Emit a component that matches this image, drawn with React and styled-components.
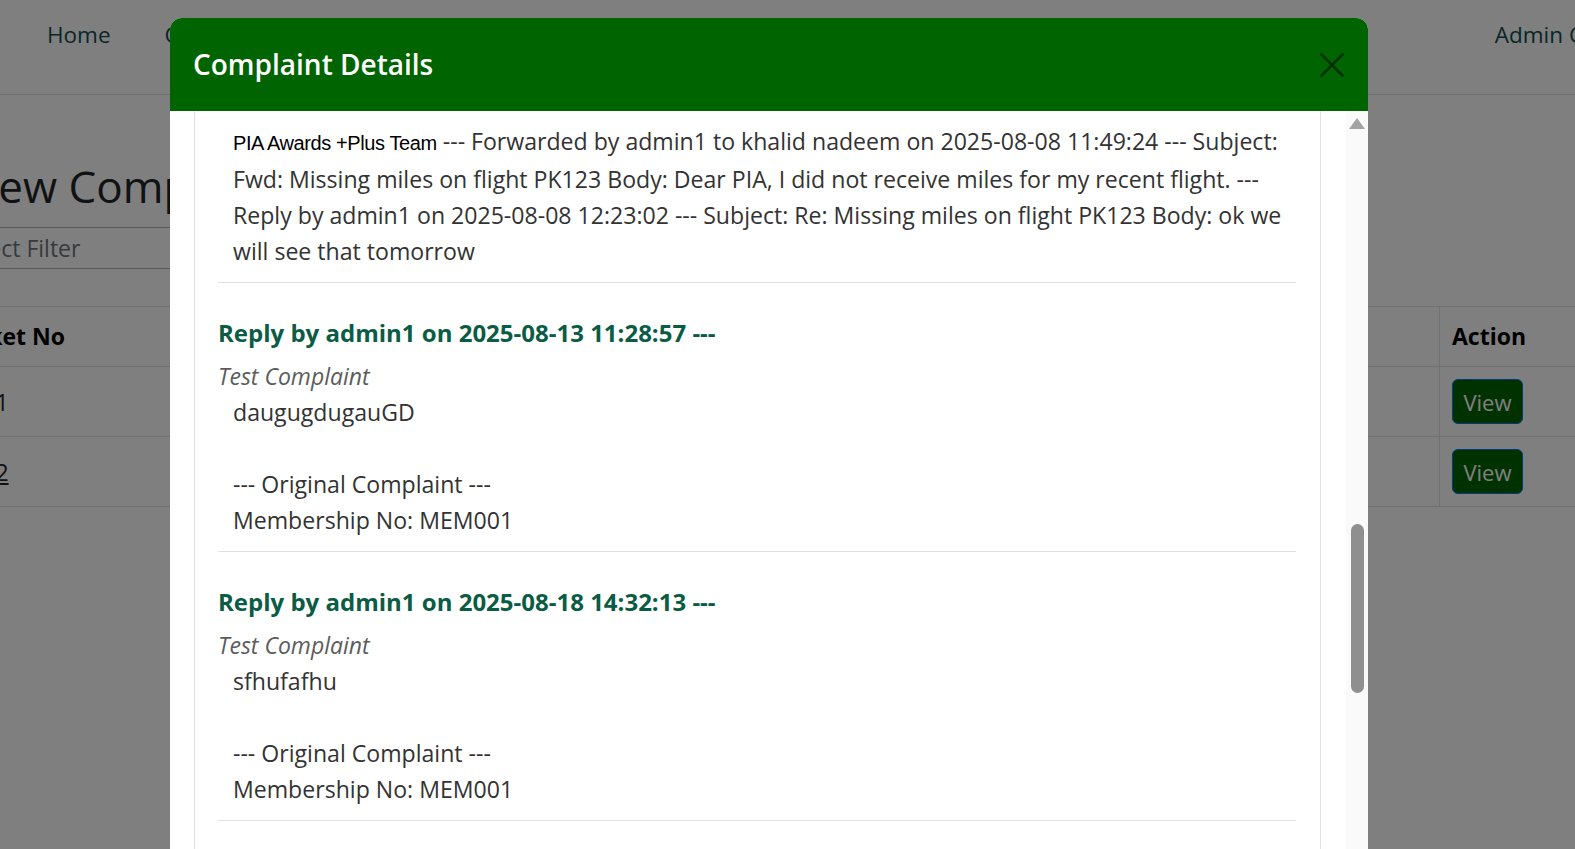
import { createGlobalStyle, styled } from "styled-components";

const GlobalStyle = createGlobalStyle`
  html, body {
    margin: 0;
    height: 100%;
    overflow: hidden;
  }
  body {
    font-family: "Open Sans", "Noto Sans", sans-serif;
    background: #fff;
    color: #212529;
  }
`;

const firstLines = [
  " --- Forwarded by admin1 to khalid nadeem on 2025-08-08 11:49:24 --- Subject:",
  "Fwd: Missing miles on flight PK123 Body: Dear PIA, I did not receive miles for my recent flight. ---",
  "Reply by admin1 on 2025-08-08 12:23:02 --- Subject: Re: Missing miles on flight PK123 Body: ok we",
  "will see that tomorrow",
];

const replies = [
  {
    by: "Reply by admin1 on 2025-08-13 11:28:57 ---",
    subject: "Test Complaint",
    body: "daugugdugauGD\n\n--- Original Complaint ---\nMembership No: MEM001",
  },
  {
    by: "Reply by admin1 on 2025-08-18 14:32:13 ---",
    subject: "Test Complaint",
    body: "sfhufafhu\n\n--- Original Complaint ---\nMembership No: MEM001",
  },
];

function App() {
  return (
    <>
      <GlobalStyle />
      <Navbar>
        <NavLink>Home</NavLink>
        <NavLink>Complaints</NavLink>
        <NavLink $right>Admin Console</NavLink>
      </Navbar>
      <Main>
        <PageTitle>View Complaints</PageTitle>
        <FilterInput placeholder="Select Filter" />
        <Table>
          <colgroup>
            <col style={{ width: 300 }} />
            <col style={{ width: 350 }} />
            <col style={{ width: 400 }} />
            <col style={{ width: 200 }} />
            <col style={{ width: 246 }} />
            <col style={{ width: 200 }} />
          </colgroup>
          <thead>
            <tr>
              <Th>Ticket No</Th>
              <Th>Member</Th>
              <Th>Subject</Th>
              <Th>Status</Th>
              <Th>Date</Th>
              <Th>Action</Th>
            </tr>
          </thead>
          <tbody>
            <tr>
              <Td>
                <TicketLink>0001</TicketLink>
              </Td>
              <Td>MEM001</Td>
              <Td>Missing miles</Td>
              <Td>Open</Td>
              <Td>2025-08-08</Td>
              <Td>
                <ViewButton>View</ViewButton>
              </Td>
            </tr>
            <tr>
              <Td>
                <TicketLink $hover>0002</TicketLink>
              </Td>
              <Td>MEM001</Td>
              <Td>Test Complaint</Td>
              <Td>Open</Td>
              <Td>2025-08-13</Td>
              <Td>
                <ViewButton>View</ViewButton>
              </Td>
            </tr>
          </tbody>
        </Table>
      </Main>

      <Backdrop />
      <Dialog>
        <ModalHeader>
          <ModalTitle>Complaint Details</ModalTitle>
          <CloseButton aria-label="Close">
            <svg width="24" height="24" viewBox="0 0 24 24">
              <path
                d="M1.5 1.5 L22.5 22.5 M22.5 1.5 L1.5 22.5"
                stroke="#000"
                strokeWidth="2.6"
                strokeLinecap="square"
              />
            </svg>
          </CloseButton>
        </ModalHeader>
        <ModalBody>
          <ScrollContent>
            <Thread>
              <Entry $first>
                <EntryText>
                  {firstLines.map((line, i) => (
                    <Line key={i}>
                      {i === 0 && <Pasted>PIA Awards +Plus Team</Pasted>}
                      {line}
                    </Line>
                  ))}
                </EntryText>
              </Entry>
              {replies.map((r, i) => (
                <Entry key={i}>
                  <ReplyBy>{r.by}</ReplyBy>
                  <Subject>{r.subject}</Subject>
                  <EntryText>{r.body}</EntryText>
                </Entry>
              ))}
            </Thread>
          </ScrollContent>
          <ScrollTrack>
            <ScrollArrow />
            <ScrollThumb />
          </ScrollTrack>
        </ModalBody>
      </Dialog>
    </>
  );
}

const Navbar = styled.nav`
  display: flex;
  align-items: flex-start;
  gap: 54px;
  width: 1653px;
  height: 95px;
  padding: 17px 0 0 47px;
  box-sizing: border-box;
  border-bottom: 1px solid #dee2e6;
  white-space: nowrap;
`;

const NavLink = styled.a`
  font-size: 22.5px;
  line-height: 36px;
  font-weight: 500;
  color: #124e4e;
  margin-left: ${(p) => (p.$right ? "auto" : "0")};
`;

const Main = styled.main`
  margin-left: -57px;
  padding-top: 62px;
`;

const PageTitle = styled.h1`
  margin: 0 0 12px 18px;
  font-size: 44px;
  line-height: 58px;
  font-weight: 500;
  color: #212529;
  white-space: nowrap;
`;

const FilterInput = styled.input`
  display: block;
  box-sizing: border-box;
  width: 700px;
  height: 42px;
  margin: 0 0 37px 0;
  padding: 0 18px 0 13px;
  border: 1px solid #b5b5b5;
  font-family: inherit;
  font-size: 23px;
  color: #212529;
  &::placeholder {
    color: #6c757d;
  }
`;

const Table = styled.table`
  table-layout: fixed;
  width: 1696px;
  border-collapse: collapse;
  font-size: 23px;
  line-height: 36px;
`;

const Th = styled.th`
  text-align: left;
  padding: 11px 12px 12px;
  border: 1px solid #dee2e6;
  font-weight: 700;
  color: #000;
  white-space: nowrap;
`;

const Td = styled.td`
  padding: 12px;
  height: 45px;
  border: 1px solid #dee2e6;
  color: #212529;
  white-space: nowrap;
`;

const TicketLink = styled.a`
  color: #212529;
  text-decoration: ${(p) => (p.$hover ? "underline" : "none")};
`;

const ViewButton = styled.button`
  width: 71px;
  height: 45px;
  border: 1px solid #0d6efd;
  border-radius: 6px;
  background: #006400;
  color: #fff;
  font-family: inherit;
  font-size: 22px;
  padding: 0;
`;

const Backdrop = styled.div`
  position: fixed;
  inset: 0;
  background: rgba(0, 0, 0, 0.5);
`;

const Dialog = styled.div`
  position: fixed;
  top: 18px;
  left: 170px;
  width: 1198px;
  bottom: -40px;
  display: flex;
  flex-direction: column;
  background: #fff;
  border-radius: 12px 12px 0 0;
  overflow: hidden;
`;

const ModalHeader = styled.div`
  flex: none;
  height: 93px;
  box-sizing: border-box;
  display: flex;
  align-items: center;
  justify-content: space-between;
  padding: 0 24px 0 23px;
  background: #006400;
`;

const ModalTitle = styled.h5`
  margin: 0;
  font-size: 28px;
  line-height: 45px;
  font-weight: 600;
  color: #fff;
`;

const CloseButton = styled.button`
  width: 24px;
  height: 24px;
  padding: 0;
  border: 0;
  background: transparent;
  opacity: 0.5;
  display: flex;
`;

const ModalBody = styled.div`
  flex: 1;
  min-height: 0;
  display: flex;
  overflow: hidden;
`;

const ScrollContent = styled.div`
  flex: 1;
  min-width: 0;
  display: flex;
  padding: 0 25px 0 24px;
`;

const Thread = styled.div`
  flex: 1;
  min-width: 0;
  overflow: hidden;
  padding: 0 24px 0 23px;
  border-left: 1px solid #dee2e6;
  border-right: 1px solid #dee2e6;
`;

const Entry = styled.div`
  padding: ${(p) => (p.$first ? "12px" : "35px")} 0 13px;
  border-bottom: 1px solid #dee2e6;
`;

const ReplyBy = styled.h6`
  margin: 0 0 11px;
  font-size: 24px;
  line-height: 29px;
  font-weight: 700;
  color: #0a5c45;
`;

const Subject = styled.div`
  font-size: 23px;
  line-height: 36px;
  font-style: italic;
  color: #5c5c5c;
`;

const EntryText = styled.div`
  padding-left: 15px;
  font-size: 23.1px;
  line-height: 36px;
  color: #333;
  white-space: pre-wrap;
`;

const Line = styled.span`
  display: block;
  white-space: nowrap;
`;

const Pasted = styled.span`
  font-family: "Liberation Sans", Arial, sans-serif;
  font-size: 20px;
  letter-spacing: -0.4px;
  color: #000;
`;

const ScrollTrack = styled.div`
  flex: none;
  width: 22px;
  display: flex;
  flex-direction: column;
  align-items: center;
  padding-top: 7px;
  background: #fafafa;
`;

const ScrollArrow = styled.div`
  width: 0;
  height: 0;
  border-left: 8px solid transparent;
  border-right: 8px solid transparent;
  border-bottom: 11px solid #a3a3a3;
`;

const ScrollThumb = styled.div`
  width: 13px;
  height: 169px;
  margin-top: 395px;
  border-radius: 7px;
  background: #8f8f8f;
`;

export default App;
